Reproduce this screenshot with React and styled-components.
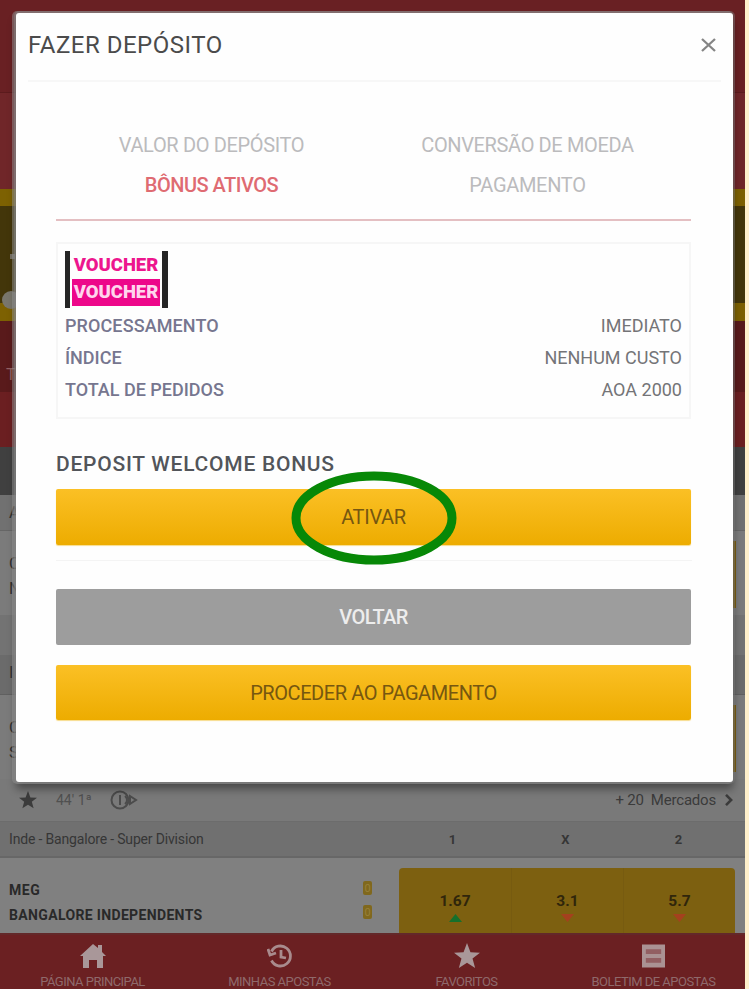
import React from "react";
import styled, { createGlobalStyle } from "styled-components";

const Global = createGlobalStyle`
  *, *::before, *::after { box-sizing: border-box; }
  body { margin: 0; background: #fff0cb; font-family: Roboto, "Liberation Sans", sans-serif; overflow: hidden; }
`;

const Stage = styled.div`
  position: relative;
  width: 749px;
  height: 989px;
  overflow: hidden;
  background: #fff0cb;
`;

const Page = styled.div`
  display: flex;
  flex-direction: column;
  width: 745px;
  height: 989px;
`;

const Band = styled.div`
  flex: none;
  height: ${(p) => p.$h}px;
  background: ${(p) => p.$bg};
  color: ${(p) => p.$color || "#303030"};
  border-bottom: ${(p) => (p.$line ? `1px solid ${p.$line}` : "0")};
  padding: ${(p) => p.$pad || "0 0 0 9px"};
  font-size: 16px;
  line-height: 24px;
`;

const Promo = styled.div`
  flex: none;
  height: 132px;
  padding: 48px 0 0 2px;
  border-top: 17px solid #7d6102;
  border-bottom: 18px solid #7d6102;
  background: #43360a;
`;

const Coin = styled.div`
  width: 18px;
  height: 18px;
  margin-top: 32px;
  border-radius: 50%;
  background: #79766c;
`;

const Dot = styled.div`
  width: 5px;
  height: 5px;
  margin-left: 8px;
  background: #777163;
`;

const MatchEdge = styled.div`
  display: flex;
  justify-content: space-between;
  flex: none;
  height: 84px;
  padding-left: 9px;
  background: #7b7b7b;
  color: #303030;
  font-size: 16px;
  line-height: 25px;
`;

const EdgeNames = styled.div`
  padding-top: 20px;
`;

const EdgeOdds = styled.div`
  width: 60px;
  height: 67px;
  margin: 10px 9px 0 0;
  background: #7c5f12;
`;

const MatchMeta = styled.div`
  display: flex;
  flex: none;
  align-items: center;
  height: 43px;
  padding: 0 12px 0 19px;
  background: #797979;
  border-bottom: 1px solid #6c6c6c;
  color: #3b3b3b;
  font-size: 15px;
`;

const MetaIcon = styled.svg`
  flex: none;
  display: block;
`;

const Clock = styled.span`
  width: 37px;
  margin: 0 16px 0 19px;
  color: #505050;
  font-size: 14px;
  white-space: nowrap;
`;

const Markets = styled.span`
  margin-left: auto;
  margin-right: 9px;
  letter-spacing: -0.2px;
`;

const League = styled.div`
  display: grid;
  flex: none;
  grid-template-columns: 387px repeat(3, 113px);
  align-items: center;
  height: 36px;
  padding-left: 9px;
  background: #707070;
  border-bottom: 2px solid #676767;
  color: #363636;
  font-size: 14px;
`;

const LeagueName = styled.span`
  letter-spacing: -0.17px;
`;

const Outcome = styled.span`
  font-weight: 700;
  font-size: 13px;
  text-align: center;
`;

const Match = styled.div`
  display: flex;
  flex: none;
  height: 75px;
  padding: 10px 10px 0 9px;
  background: #808080;
`;

const Teams = styled.div`
  width: 352px;
  padding-top: 10px;
  color: #292929;
  font-size: 14px;
  font-weight: 700;
  line-height: 25px;
`;

const Team = styled.div`
  letter-spacing: ${(p) => p.$track || 0}px;
`;

const Scores = styled.div`
  display: flex;
  flex-direction: column;
  gap: 10px;
  width: 38px;
  padding: 13px 0 0 2px;
`;

const Score = styled.span`
  display: grid;
  place-items: center;
  width: 9px;
  height: 14px;
  border-radius: 2px;
  background: #80681d;
  color: #97803a;
  font-size: 11px;
`;

const OddsGroup = styled.div`
  display: grid;
  grid-template-columns: repeat(3, 1fr);
  flex: 1;
  border-radius: 4px 4px 0 0;
  background: #7d6010;
`;

const Odd = styled.div`
  display: flex;
  flex-direction: column;
  align-items: center;
  gap: 3px;
  padding-top: 24px;
  border-left: ${(p) => (p.$divided ? "1px solid #775b10" : "0")};
  color: #30260b;
  font-size: 15.5px;
  font-weight: 700;
  line-height: 19px;
`;

const Navigation = styled.nav`
  display: grid;
  grid-template-columns: repeat(4, 187px);
  flex: none;
  height: 56px;
  background: #6b2022;
  border-top: 2px solid #632829;
  overflow: hidden;
  color: #8f696b;
`;

const NavItem = styled.div`
  display: flex;
  flex-direction: column;
  align-items: center;
  gap: 5px;
  padding-top: 8px;
  padding-right: 2px;
  font-size: 13px;
  line-height: 16px;
  letter-spacing: -0.52px;
  white-space: nowrap;
`;

const Modal = styled.section`
  position: absolute;
  left: 16px;
  top: 13px;
  width: 717px;
  height: 769px;
  display: flex;
  flex-direction: column;
  padding: 0 12px;
  border-radius: 3px;
  background: #fefefe;
  box-shadow: -2px 0 0 2px rgba(145, 145, 145, 0.5), 0 0 0 2px rgba(125, 125, 125, 0.45), 0 7px 9px rgba(0, 0, 0, 0.4);
`;

const Header = styled.header`
  display: flex;
  align-items: center;
  justify-content: space-between;
  flex: none;
  height: 69px;
  padding: 0 5px 3px 0;
  border-bottom: 2px solid #f7f7f7;
  color: #4b4b4b;
`;

const Title = styled.h1`
  margin: 0;
  font-size: 24px;
  font-weight: 400;
  line-height: 30px;
  letter-spacing: 0.5px;
`;

const Body = styled.div`
  display: flex;
  flex-direction: column;
  padding: 0 29px 0 28px;
`;

const Tabs = styled.div`
  display: grid;
  grid-template-columns: 311px 321px;
  grid-template-rows: 40px 40px;
  align-items: center;
  width: 635px;
  height: 139px;
  padding-top: 43px;
  border-bottom: 2px solid #e4bfc2;
`;

const Tab = styled.div`
  color: ${(p) => (p.$active ? "#df6b72" : "#bbbbbd")};
  font-size: 20px;
  font-weight: ${(p) => (p.$active ? 500 : 400)};
  letter-spacing: ${(p) => p.$track}px;
  text-align: center;
`;

const VoucherCard = styled.div`
  width: 635px;
  height: 177px;
  margin-top: 21px;
  padding: 7px 7px 0;
  border: 2px solid #f6f6f6;
`;

const VoucherLogo = styled.div`
  display: flex;
  flex-direction: column;
  width: 103px;
  height: 57px;
  margin-bottom: 1px;
  padding: 3px 2px 0 2px;
  border-left: 5px solid #252525;
  border-right: 6px solid #252525;
  font-size: 18.5px;
  font-weight: 900;
  line-height: 23px;
  text-align: center;
  letter-spacing: -0.05px;
`;

const VoucherWord = styled.span`
  height: ${(p) => (p.$filled ? 27 : 25)}px;
  padding-top: ${(p) => (p.$filled ? 2 : 0)}px;
  background: ${(p) => (p.$filled ? "#ed078a" : "transparent")};
  color: ${(p) => (p.$filled ? "#ffd5ed" : "#ed168e")};
`;

const Detail = styled.div`
  display: flex;
  justify-content: space-between;
  height: 32px;
  align-items: center;
  font-size: 18px;
`;

const DetailName = styled.span`
  color: #76768f;
  font-weight: 500;
  letter-spacing: ${(p) => p.$track}px;
`;

const DetailValue = styled.span`
  color: #747477;
`;

const BonusTitle = styled.h2`
  height: 70px;
  margin: 0;
  padding-top: 33px;
  color: #52555a;
  font-size: 21px;
  font-weight: 500;
  line-height: 25px;
  letter-spacing: 0.75px;
`;

const ActionButton = styled.button`
  display: flex;
  align-items: center;
  justify-content: center;
  width: 635px;
  height: ${(p) => p.$h || 56}px;
  margin: 0;
  padding: 0;
  border: 0;
  border-radius: 2px;
  background: ${(p) => (p.$muted ? "#9d9d9d" : "linear-gradient(#fbc025, #edac00)")};
  box-shadow: ${(p) => (p.$muted ? "none" : "0 1px 1px #f8dc8b")};
  color: ${(p) => (p.$muted ? "#ededed" : "#765710")};
  font-family: inherit;
  font-size: 20px;
  font-weight: ${(p) => (p.$muted ? 500 : 400)};
  letter-spacing: ${(p) => p.$track || 0}px;
`;

const BonusAction = styled.div`
  position: relative;
  height: 72px;
  border-bottom: 1px solid #f4f4f4;
`;

const Highlight = styled.svg`
  position: absolute;
  left: 235px;
  top: -19px;
  overflow: visible;
  pointer-events: none;
`;

const FooterActions = styled.div`
  display: flex;
  flex-direction: column;
  gap: 20px;
  padding-top: 28px;
`;

const tabs = [
  { text: "VALOR DO DEPÓSITO", track: -0.35 },
  { text: "CONVERSÃO DE MOEDA", track: -0.37 },
  { text: "BÔNUS ATIVOS", track: -0.5, active: true },
  { text: "PAGAMENTO", track: -0.3 },
];

const details = [
  ["PROCESSAMENTO", "IMEDIATO", 0.1],
  ["ÍNDICE", "NENHUM CUSTO", 0],
  ["TOTAL DE PEDIDOS", "AOA 2000", 0],
];

function Star({ size, color = "currentColor" }) {
  return (
    <MetaIcon width={size} height={size} viewBox="0 0 24 24">
      <path fill={color} d="m12 0 3.2 8.5 8.8.5-6.9 5.4L19.5 23 12 18.2 4.5 23l2.4-8.6L0 9l8.8-.5Z" />
    </MetaIcon>
  );
}

function Trend({ up }) {
  return (
    <MetaIcon width="13" height="8" viewBox="0 0 13 8">
      <path fill={up ? "#16702c" : "#a4411e"} d={up ? "M0 8 6.5 0 13 8Z" : "m0 0 6.5 8L13 0Z"} />
    </MetaIcon>
  );
}

function HomeIcon() {
  return (
    <MetaIcon width="26" height="26" viewBox="0 0 26 26">
      <path fill="#a99799" d="M0 13 13 1l5 4V2h4v7l4 4h-3v12h-6v-8H9v8H3V13Z" />
    </MetaIcon>
  );
}

function HistoryIcon() {
  return (
    <MetaIcon width="26" height="26" viewBox="0 0 26 26" fill="none" stroke="#a98b8d" strokeWidth="2.8">
      <path d="M4.5 8.5a10 10 0 1 1 0 9M14 7v7l5 1M1 6l2 6 6-2" />
    </MetaIcon>
  );
}

function SlipIcon() {
  return (
    <MetaIcon width="23" height="26" viewBox="0 0 24 26">
      <path fill="#aa9293" d="M0 1h24v24H0Z" />
      <path fill="#925f62" d="M4 6h16v5H4Zm0 9h16v5H4Z" />
    </MetaIcon>
  );
}

export default function App() {
  return (
    <Stage>
      <Global />
      <Page>
        <Band $h={93} $bg="#692023" $line="#5c1b1d" />
        <Band $h={96} $bg="#702629" />
        <Promo><Dot /><Coin /></Promo>
        <Band $h={71} $bg="#591a1b" $color="#926263" $pad="42px 0 0 6px">T</Band>
        <Band $h={55} $bg="#6b1f21" />
        <Band $h={48} $bg="#404040" />
        <Band $h={36} $bg="#717171" $line="#666" $pad="6px 0 0 9px">A</Band>
        <MatchEdge><EdgeNames>C<br />N</EdgeNames><EdgeOdds /></MatchEdge>
        <Band $h={40} $bg="#737373" />
        <Band $h={40} $bg="#6b6b6b" $line="#606060" $pad="6px 0 0 9px">I</Band>
        <MatchEdge><EdgeNames>C<br />S</EdgeNames><EdgeOdds /></MatchEdge>
        <MatchMeta>
          <Star size={18} />
          <Clock>44' 1ª</Clock>
          <MetaIcon width="29" height="20" viewBox="0 0 29 20" fill="none" stroke="#4b4b4b" strokeWidth="2">
            <circle cx="11" cy="10" r="8.5" /><path d="M11 5v10M16 6a5 5 0 0 1 0 8M21 6v8l6-4Z" />
          </MetaIcon>
          <Markets>+ 20 &nbsp;Mercados</Markets>
          <MetaIcon width="8" height="12" viewBox="0 0 9 14" fill="none" stroke="currentColor" strokeWidth="3"><path d="m1 1 6 6-6 6" /></MetaIcon>
        </MatchMeta>
        <League>
          <LeagueName>Inde - Bangalore - Super Division</LeagueName>
          <Outcome>1</Outcome><Outcome>X</Outcome><Outcome>2</Outcome>
        </League>
        <Match>
          <Teams><Team $track={0.6}>MEG</Team><Team $track={0.35}>BANGALORE INDEPENDENTS</Team></Teams>
          <Scores><Score>0</Score><Score>0</Score></Scores>
          <OddsGroup>
            <Odd>1.67<Trend up /></Odd>
            <Odd $divided>3.1<Trend /></Odd>
            <Odd $divided>5.7<Trend /></Odd>
          </OddsGroup>
        </Match>
        <Navigation>
          <NavItem><HomeIcon />PÁGINA PRINCIPAL</NavItem>
          <NavItem><HistoryIcon />MINHAS APOSTAS</NavItem>
          <NavItem><Star size={26} color="#a99799" />FAVORITOS</NavItem>
          <NavItem><SlipIcon />BOLETIM DE APOSTAS</NavItem>
        </Navigation>
      </Page>
      <Modal>
        <Header>
          <Title>FAZER DEPÓSITO</Title>
          <MetaIcon width="15" height="16" viewBox="0 0 15 16" fill="none" stroke="#858585" strokeWidth="2.3"><path d="m1 2 13 12M14 2 1 14" /></MetaIcon>
        </Header>
        <Body>
          <Tabs>
            {tabs.map((tab) => <Tab key={tab.text} $active={tab.active} $track={tab.track}>{tab.text}</Tab>)}
          </Tabs>
          <VoucherCard>
            <VoucherLogo><VoucherWord>VOUCHER</VoucherWord><VoucherWord $filled>VOUCHER</VoucherWord></VoucherLogo>
            {details.map(([name, value, track]) => (
              <Detail key={name}><DetailName $track={track}>{name}</DetailName><DetailValue>{value}</DetailValue></Detail>
            ))}
          </VoucherCard>
          <BonusTitle>DEPOSIT WELCOME BONUS</BonusTitle>
          <BonusAction>
            <ActionButton $track={-0.3}>ATIVAR</ActionButton>
            <Highlight width="166" height="95" viewBox="0 0 166 95"><ellipse cx="83" cy="48" rx="78" ry="42" fill="none" stroke="#078807" strokeWidth="9" /></Highlight>
          </BonusAction>
          <FooterActions>
            <ActionButton $muted $track={-0.6}>VOLTAR</ActionButton>
            <ActionButton $h={55} $track={-0.43}>PROCEDER AO PAGAMENTO</ActionButton>
          </FooterActions>
        </Body>
      </Modal>
    </Stage>
  );
}
